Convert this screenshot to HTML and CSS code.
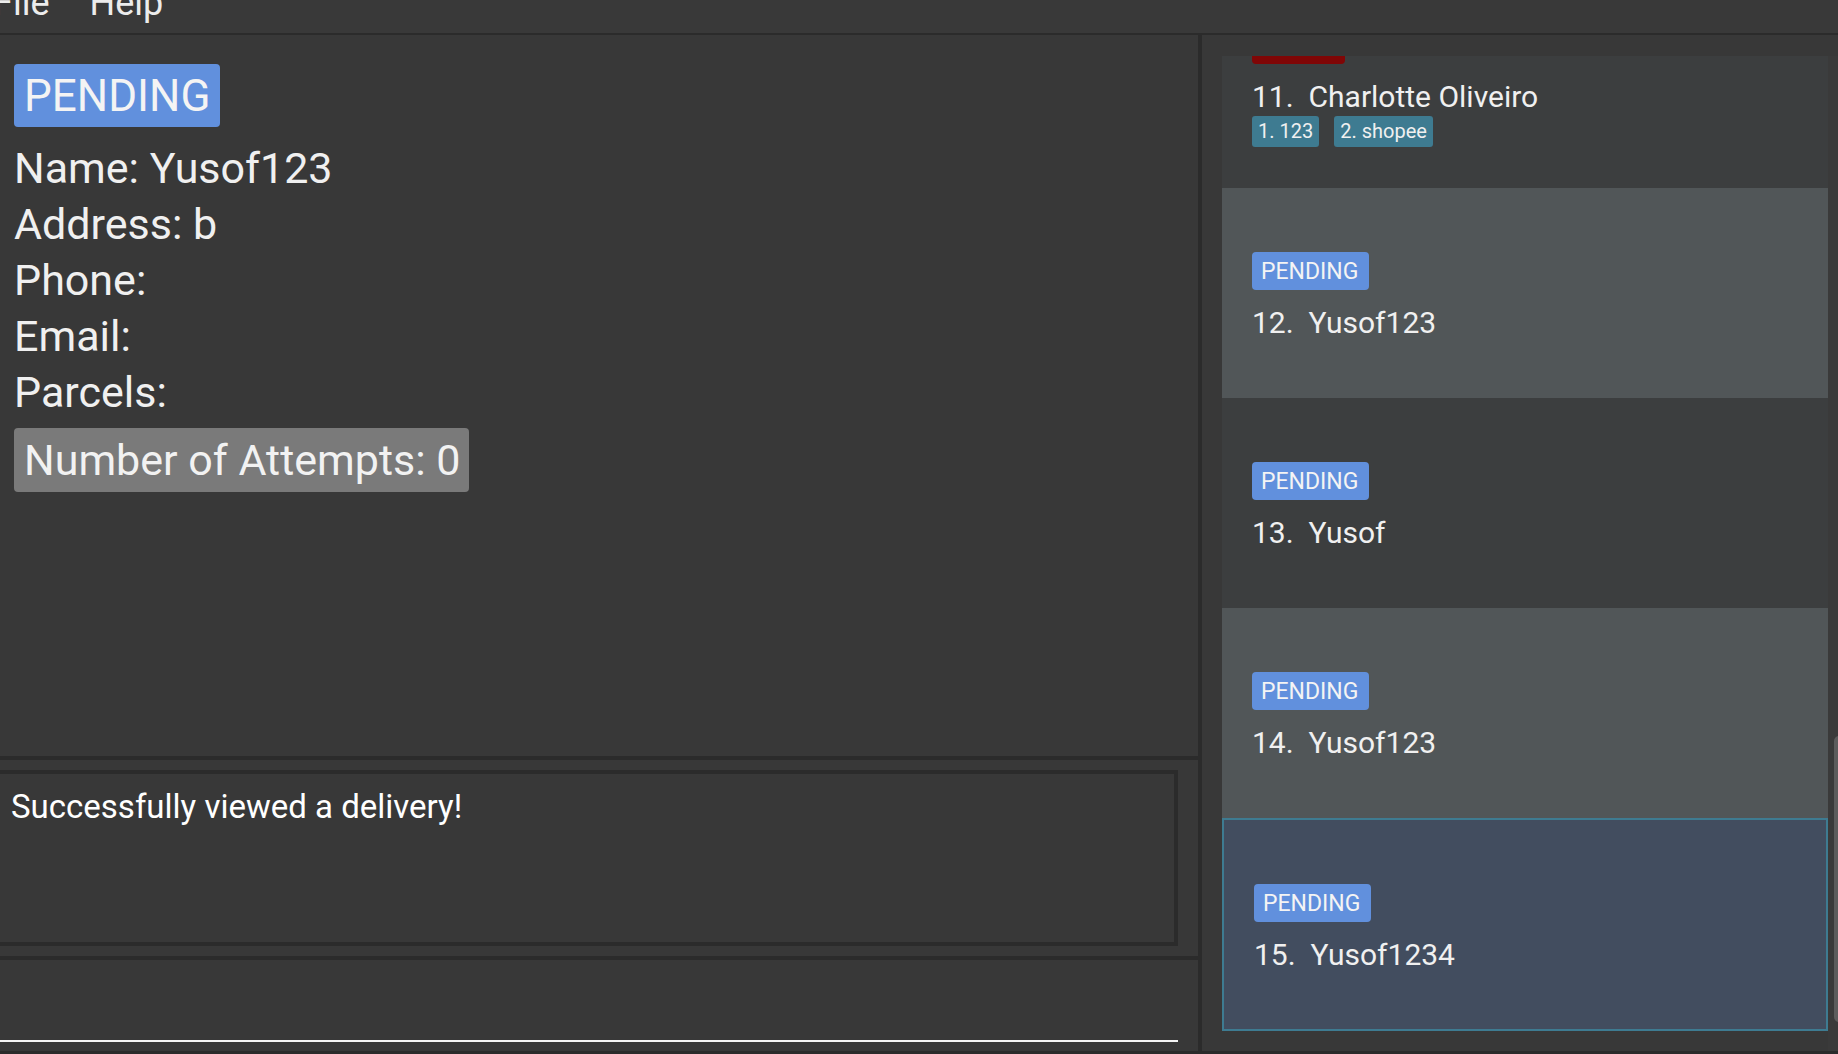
FILE: index.html
```html
<!DOCTYPE html>
<html lang="en">
<head>
<meta charset="utf-8">
<title>Delivery Book</title>
<link rel="stylesheet" href="styles.css">
</head>
<body>
<div class="app">
  <div class="menubar">
    <span class="menu first">File</span>
    <span class="menu">Help</span>
  </div>
  <div class="main">
    <div class="left">
      <section class="detail">
        <span class="status status-big">PENDING</span>
        <div class="field field-first">Name: Yusof123</div>
        <div class="field">Address: b</div>
        <div class="field">Phone:</div>
        <div class="field">Email:</div>
        <div class="field">Parcels:</div>
        <span class="attempts">Number of Attempts: 0</span>
      </section>
      <div class="hsep"></div>
      <section class="result">
        <div class="result-box">Successfully viewed a delivery!</div>
      </section>
      <div class="hsep"></div>
      <section class="command">
        <div class="command-field"></div>
      </section>
    </div>
    <div class="vsep"></div>
    <div class="right">
      <div class="list-wrap">
        <div class="viewport">
          <div class="list">
            <div class="card even">
              <span class="badge badge-failed">FAILED</span>
              <div class="card-name">11.&nbsp; Charlotte Oliveiro</div>
              <div class="tags">
                <span class="tag">1. 123</span>
                <span class="tag">2. shopee</span>
              </div>
            </div>
            <div class="card odd">
              <span class="badge">PENDING</span>
              <div class="card-name">12.&nbsp; Yusof123</div>
            </div>
            <div class="card even">
              <span class="badge">PENDING</span>
              <div class="card-name">13.&nbsp; Yusof</div>
            </div>
            <div class="card odd">
              <span class="badge">PENDING</span>
              <div class="card-name">14.&nbsp; Yusof123</div>
            </div>
            <div class="card selected">
              <span class="badge">PENDING</span>
              <div class="card-name">15.&nbsp; Yusof1234</div>
            </div>
          </div>
        </div>
        <div class="track"><div class="thumb"></div></div>
      </div>
    </div>
  </div>
  <div class="bottom-line"></div>
</div>
</body>
</html>
```

FILE: styles.css
```css
* { box-sizing: border-box; }

html, body {
  margin: 0;
  padding: 0;
  background: #383838;
  overflow: hidden;
}

body {
  font-family: Roboto, "Liberation Sans", sans-serif;
  color: #f0f0f0;
}

.app {
  width: 1838px;
  height: 1054px;
  display: flex;
  flex-direction: column;
  overflow: hidden;
  background: #383838;
}

/* Menu bar */
.menubar {
  height: 35px;
  flex: none;
  display: flex;
  align-items: flex-start;
  gap: 40px;
  background: #393939;
  border-bottom: 2px solid #2b2b2b;
  overflow: hidden;
}

.menu {
  font-size: 36px;
  line-height: 36px;
  margin-top: -15px;
  color: #ececec;
}

.menu.first { margin-left: -7px; }

/* Main area */
.main {
  flex: 1;
  display: flex;
  min-height: 0;
}

.left {
  width: 1198px;
  flex: none;
  display: flex;
  flex-direction: column;
}

.vsep {
  width: 4px;
  flex: none;
  background: #2b2b2b;
}

.hsep {
  height: 4px;
  flex: none;
  background: #2b2b2b;
}

/* Detail panel */
.detail {
  flex: 1;
  padding: 29px 0 0 14px;
  display: flex;
  flex-direction: column;
  align-items: flex-start;
}

.status {
  background: #6190dd;
  color: #f4f4f4;
  border-radius: 4px;
}

.status-big {
  font-size: 44px;
  line-height: 52px;
  padding: 6px 10px 5px 10px;
}

.field {
  font-size: 43px;
  line-height: 56px;
  color: #f0f0f0;
}

.field-first { margin-top: 13px; }

.attempts {
  margin-top: 8px;
  background: #7a7a7a;
  color: #f2f2f2;
  font-size: 43px;
  line-height: 52px;
  padding: 6px 9px 6px 10px;
  border-radius: 4px;
}

/* Result display */
.result {
  height: 196px;
  flex: none;
  padding: 10px 20px 10px 0;
}

.result-box {
  height: 100%;
  margin-left: -6px;
  border: 4px solid #2b2b2b;
  padding: 13px 0 0 13px;
  font-size: 33px;
  line-height: 40px;
  color: #ffffff;
}

/* Command box */
.command {
  height: 91px;
  flex: none;
  padding: 10px 20px 0 0;
}

.command-field {
  height: 72px;
  border-bottom: 2px solid #f4f4f4;
}

/* Right list panel */
.right {
  flex: 1;
  padding: 21px 0 0 20px;
  display: flex;
  flex-direction: column;
  min-width: 0;
}

.list-wrap {
  flex: 1;
  display: flex;
  min-height: 0;
}

.viewport {
  flex: 1;
  overflow: hidden;
}

.list {
  margin-top: -78px;
  display: flex;
  flex-direction: column;
}

.card {
  height: 210px;
  padding: 7px 0 0 30px;
  display: flex;
  flex-direction: column;
  justify-content: center;
  align-items: flex-start;
}

.card.even { background: #3c3e3f; }
.card.odd { background: #515658; }
.card.selected {
  height: 213px;
  background: #424d5f;
  border: 2px solid #3e7b91;
}

.badge {
  background: #6190dd;
  color: #f4f4f4;
  font-size: 23px;
  line-height: 28px;
  padding: 6px 11px 4px 9px;
  border-radius: 4px;
  margin-bottom: 15px;
}

.badge-failed { background: #800606; }

.card-name {
  font-size: 30px;
  line-height: 36px;
  color: #f0f0f0;
  white-space: nowrap;
}

.tags {
  display: flex;
  gap: 15px;
  margin-top: 1px;
}

.tag {
  background: #3e7b91;
  color: #f0f0f0;
  font-size: 20px;
  line-height: 31px;
  padding: 0 6px;
  border-radius: 3px;
}

/* Scrollbar */
.track {
  width: 10px;
  flex: none;
  background: #3a3a3a;
  overflow: visible;
}

.thumb {
  width: 10px;
  height: 286px;
  margin: 680px 0 0 6px;
  background: #5c5c5c;
  border-radius: 5px;
}

.bottom-line {
  height: 3px;
  flex: none;
  background: #2b2b2b;
}
```
